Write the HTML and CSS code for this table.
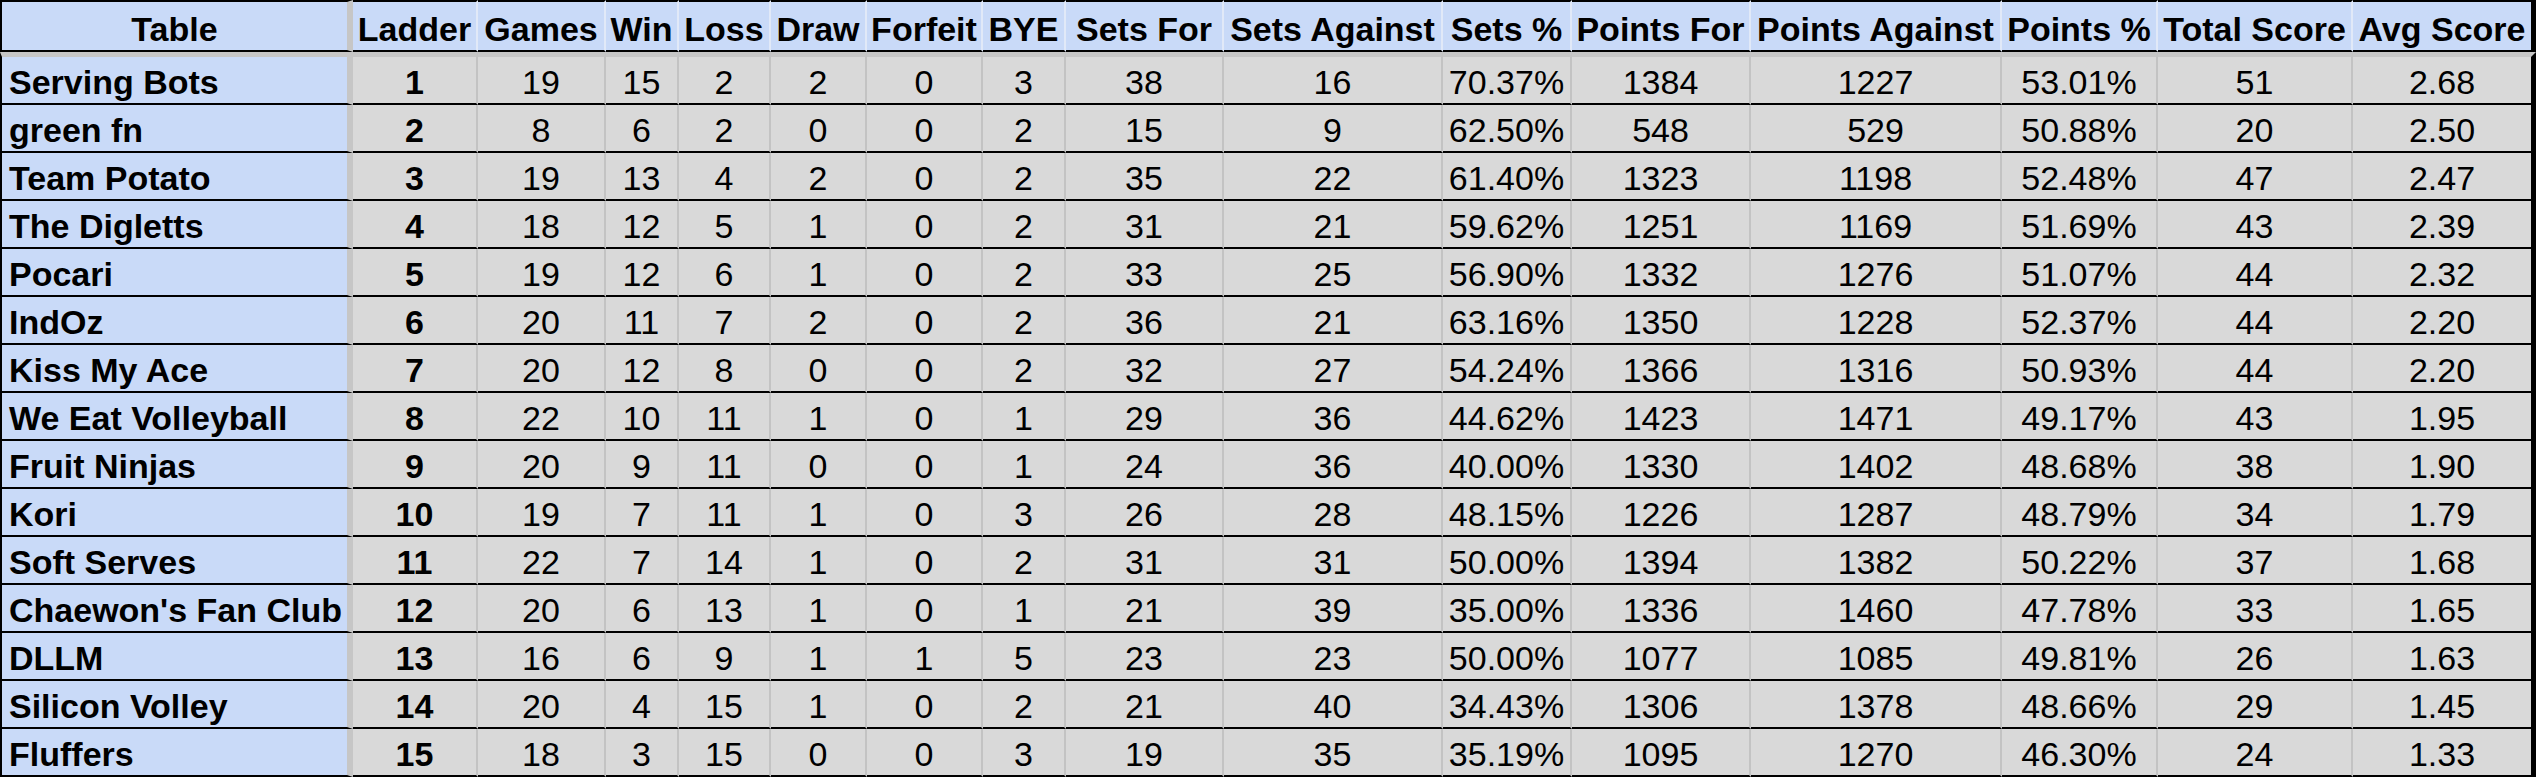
FILE: index.html
```html
<!DOCTYPE html>
<html lang="en">
<head>
<meta charset="utf-8">
<title>Ladder Table</title>
<link rel="stylesheet" href="styles.css">
</head>
<body>
<table class="standings">
  <thead>
    <tr>
      <th class="team-head c-team">Table</th>
      <th class="c-ladder">Ladder</th>
      <th class="c-games">Games</th>
      <th class="c-win">Win</th>
      <th class="c-loss">Loss</th>
      <th class="c-draw">Draw</th>
      <th class="c-forfeit">Forfeit</th>
      <th class="c-bye">BYE</th>
      <th class="c-sf">Sets For</th>
      <th class="c-sa">Sets Against</th>
      <th class="c-sp">Sets %</th>
      <th class="c-pf">Points For</th>
      <th class="c-pa">Points Against</th>
      <th class="c-pp">Points %</th>
      <th class="c-ts">Total Score</th>
      <th class="c-avg last">Avg Score</th>
    </tr>
  </thead>
  <tbody>
    <tr><td class="team">Serving Bots</td><td class="rank">1</td><td>19</td><td>15</td><td>2</td><td>2</td><td>0</td><td>3</td><td>38</td><td>16</td><td>70.37%</td><td>1384</td><td>1227</td><td>53.01%</td><td>51</td><td class="last">2.68</td></tr>
    <tr><td class="team">green fn</td><td class="rank">2</td><td>8</td><td>6</td><td>2</td><td>0</td><td>0</td><td>2</td><td>15</td><td>9</td><td>62.50%</td><td>548</td><td>529</td><td>50.88%</td><td>20</td><td class="last">2.50</td></tr>
    <tr><td class="team">Team Potato</td><td class="rank">3</td><td>19</td><td>13</td><td>4</td><td>2</td><td>0</td><td>2</td><td>35</td><td>22</td><td>61.40%</td><td>1323</td><td>1198</td><td>52.48%</td><td>47</td><td class="last">2.47</td></tr>
    <tr><td class="team">The Digletts</td><td class="rank">4</td><td>18</td><td>12</td><td>5</td><td>1</td><td>0</td><td>2</td><td>31</td><td>21</td><td>59.62%</td><td>1251</td><td>1169</td><td>51.69%</td><td>43</td><td class="last">2.39</td></tr>
    <tr><td class="team">Pocari</td><td class="rank">5</td><td>19</td><td>12</td><td>6</td><td>1</td><td>0</td><td>2</td><td>33</td><td>25</td><td>56.90%</td><td>1332</td><td>1276</td><td>51.07%</td><td>44</td><td class="last">2.32</td></tr>
    <tr><td class="team">IndOz</td><td class="rank">6</td><td>20</td><td>11</td><td>7</td><td>2</td><td>0</td><td>2</td><td>36</td><td>21</td><td>63.16%</td><td>1350</td><td>1228</td><td>52.37%</td><td>44</td><td class="last">2.20</td></tr>
    <tr><td class="team">Kiss My Ace</td><td class="rank">7</td><td>20</td><td>12</td><td>8</td><td>0</td><td>0</td><td>2</td><td>32</td><td>27</td><td>54.24%</td><td>1366</td><td>1316</td><td>50.93%</td><td>44</td><td class="last">2.20</td></tr>
    <tr><td class="team">We Eat Volleyball</td><td class="rank">8</td><td>22</td><td>10</td><td>11</td><td>1</td><td>0</td><td>1</td><td>29</td><td>36</td><td>44.62%</td><td>1423</td><td>1471</td><td>49.17%</td><td>43</td><td class="last">1.95</td></tr>
    <tr><td class="team">Fruit Ninjas</td><td class="rank">9</td><td>20</td><td>9</td><td>11</td><td>0</td><td>0</td><td>1</td><td>24</td><td>36</td><td>40.00%</td><td>1330</td><td>1402</td><td>48.68%</td><td>38</td><td class="last">1.90</td></tr>
    <tr><td class="team">Kori</td><td class="rank">10</td><td>19</td><td>7</td><td>11</td><td>1</td><td>0</td><td>3</td><td>26</td><td>28</td><td>48.15%</td><td>1226</td><td>1287</td><td>48.79%</td><td>34</td><td class="last">1.79</td></tr>
    <tr><td class="team">Soft Serves</td><td class="rank">11</td><td>22</td><td>7</td><td>14</td><td>1</td><td>0</td><td>2</td><td>31</td><td>31</td><td>50.00%</td><td>1394</td><td>1382</td><td>50.22%</td><td>37</td><td class="last">1.68</td></tr>
    <tr><td class="team">Chaewon's Fan Club</td><td class="rank">12</td><td>20</td><td>6</td><td>13</td><td>1</td><td>0</td><td>1</td><td>21</td><td>39</td><td>35.00%</td><td>1336</td><td>1460</td><td>47.78%</td><td>33</td><td class="last">1.65</td></tr>
    <tr><td class="team">DLLM</td><td class="rank">13</td><td>16</td><td>6</td><td>9</td><td>1</td><td>1</td><td>5</td><td>23</td><td>23</td><td>50.00%</td><td>1077</td><td>1085</td><td>49.81%</td><td>26</td><td class="last">1.63</td></tr>
    <tr><td class="team">Silicon Volley</td><td class="rank">14</td><td>20</td><td>4</td><td>15</td><td>1</td><td>0</td><td>2</td><td>21</td><td>40</td><td>34.43%</td><td>1306</td><td>1378</td><td>48.66%</td><td>29</td><td class="last">1.45</td></tr>
    <tr><td class="team">Fluffers</td><td class="rank">15</td><td>18</td><td>3</td><td>15</td><td>0</td><td>0</td><td>3</td><td>19</td><td>35</td><td>35.19%</td><td>1095</td><td>1270</td><td>46.30%</td><td>24</td><td class="last">1.33</td></tr>
  </tbody>
</table>
</body>
</html>
```

FILE: styles.css
```css
* { box-sizing: border-box; }

html, body {
  margin: 0;
  padding: 0;
  background: #ffffff;
}

.standings {
  border-collapse: separate;
  border-spacing: 0;
  table-layout: fixed;
  width: 2536px;
  font-family: "Liberation Sans", Arial, sans-serif;
  font-size: 34px;
  color: #000000;
}

.standings th,
.standings td {
  padding: 0;
  line-height: 42px;
  vertical-align: bottom;
  text-align: center;
  white-space: nowrap;
  overflow: hidden;
}

/* column widths (border-box) */
.c-team { width: 353px; }
.c-ladder { width: 125px; }
.c-games { width: 128px; }
.c-win { width: 73px; }
.c-loss { width: 92px; }
.c-draw { width: 96px; }
.c-forfeit { width: 116px; }
.c-bye { width: 83px; }
.c-sf { width: 158px; }
.c-sa { width: 219px; }
.c-sp { width: 129px; }
.c-pf { width: 179px; }
.c-pa { width: 251px; }
.c-pp { width: 156px; }
.c-ts { width: 195px; }
.c-avg { width: 183px; }

.standings thead tr { height: 52px; }

.standings th {
  background: #c9daf8;
  font-weight: bold;
  border-top: 2px solid #000000;
  border-bottom: 2px solid #000000;
  border-right: 2px solid #e1e9f8;
}

.standings tbody tr { height: 48px; }
.standings tbody tr:first-child { height: 53px; }

.standings td {
  background: #d9d9d9;
  border-bottom: 2px solid #000000;
  border-right: 2px solid #c3c3c3;
}

.standings tbody tr:first-child td {
  border-top: 5px solid #c6c6c6;
}

.standings .team-head {
  border-left: 2px solid #000000;
  border-right: 6px solid #c6c6c6;
}

.standings .team {
  background: #c9daf8;
  font-weight: bold;
  text-align: left;
  padding-left: 7px;
  border-left: 2px solid #000000;
  border-right: 6px solid #c6c6c6;
}

.standings .rank { font-weight: bold; }

.standings .last { border-right: 5px solid #000000; }
```
